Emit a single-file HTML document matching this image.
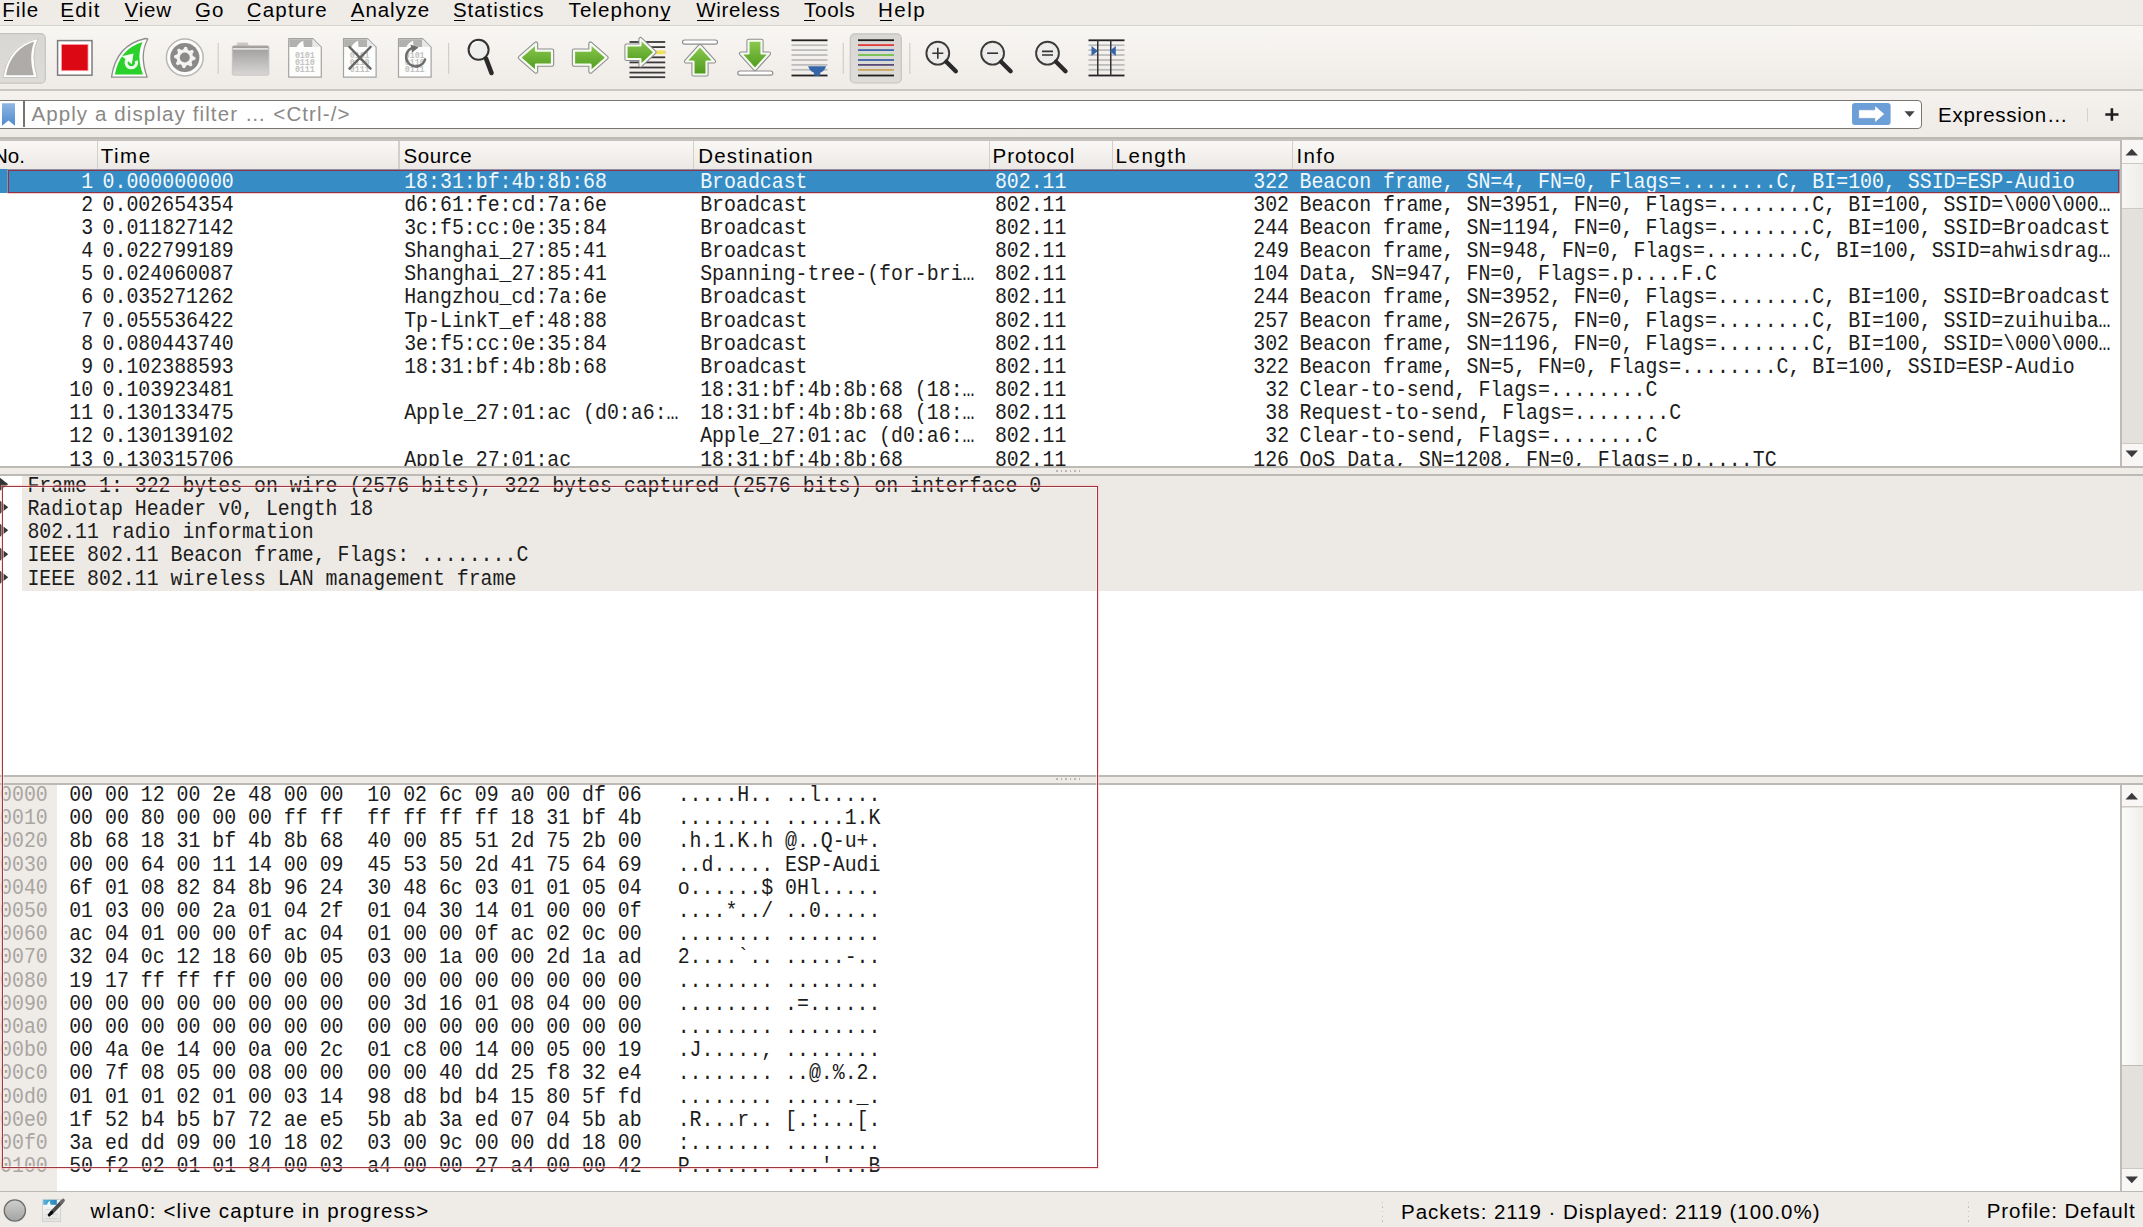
<!DOCTYPE html>
<html><head><meta charset="utf-8"><title>Wireshark</title>
<style>
html,body{margin:0;padding:0}
body{width:2143px;height:1227px;overflow:hidden;position:relative;background:#efebe7;font-family:"Liberation Sans", sans-serif}
div,svg{position:absolute}
.s{white-space:pre;line-height:normal;font-family:"Liberation Sans", sans-serif}
.m{white-space:pre;line-height:normal;font-family:"Liberation Mono", monospace;font-size:19.8970px;transform:scaleY(1.07);transform-origin:0 17px}
</style></head>
<body>
<div style="left:0px;top:0px;width:2143px;height:25px;background:#efebe7"></div>
<div style="left:0px;top:25px;width:2143px;height:1px;background:#d9d5d0"></div>
<div id="mFile" class="s" style="left:2.20px;top:-2.35px;font-size:20.5px;letter-spacing:1.000px;color:#000;">File</div>
<div id="mEdit" class="s" style="left:60.20px;top:-2.35px;font-size:20.5px;letter-spacing:1.333px;color:#000;">Edit</div>
<div id="mView" class="s" style="left:124.60px;top:-2.35px;font-size:20.5px;letter-spacing:0.833px;color:#000;">View</div>
<div id="mGo" class="s" style="left:195.00px;top:-2.35px;font-size:20.5px;letter-spacing:1.000px;color:#000;">Go</div>
<div id="mCapture" class="s" style="left:246.80px;top:-2.35px;font-size:20.5px;letter-spacing:1.167px;color:#000;">Capture</div>
<div id="mAnalyze" class="s" style="left:350.80px;top:-2.35px;font-size:20.5px;letter-spacing:0.917px;color:#000;">Analyze</div>
<div id="mStatistics" class="s" style="left:453.00px;top:-2.35px;font-size:20.5px;letter-spacing:0.944px;color:#000;">Statistics</div>
<div id="mTelephony" class="s" style="left:568.60px;top:-2.35px;font-size:20.5px;letter-spacing:1.062px;color:#000;">Telephony</div>
<div id="mWireless" class="s" style="left:696.20px;top:-2.35px;font-size:20.5px;letter-spacing:0.714px;color:#000;">Wireless</div>
<div id="mTools" class="s" style="left:804.00px;top:-2.35px;font-size:20.5px;letter-spacing:0.750px;color:#000;">Tools</div>
<div id="mHelp" class="s" style="left:878.00px;top:-2.35px;font-size:20.5px;letter-spacing:1.500px;color:#000;">Help</div>
<div style="left:4.2px;top:19.6px;width:9.3px;height:1.6px;background:#000"></div>
<div style="left:62.5px;top:19.6px;width:11.0px;height:1.6px;background:#000"></div>
<div style="left:124.5px;top:19.6px;width:13.0px;height:1.6px;background:#000"></div>
<div style="left:196px;top:19.6px;width:12px;height:1.6px;background:#000"></div>
<div style="left:248px;top:19.6px;width:12px;height:1.6px;background:#000"></div>
<div style="left:351px;top:19.6px;width:13px;height:1.6px;background:#000"></div>
<div style="left:454px;top:19.6px;width:11px;height:1.6px;background:#000"></div>
<div style="left:659px;top:19.6px;width:11.299999999999955px;height:1.6px;background:#000"></div>
<div style="left:696.5px;top:19.6px;width:17.5px;height:1.6px;background:#000"></div>
<div style="left:804px;top:19.6px;width:11px;height:1.6px;background:#000"></div>
<div style="left:880px;top:19.6px;width:12px;height:1.6px;background:#000"></div>
<div style="left:0px;top:26px;width:2143px;height:63.5px;background:linear-gradient(#f8f6f3,#efebe7)"></div>
<div style="left:0px;top:89px;width:2143px;height:1.5px;background:#c9c5c0"></div>
<svg style="left:0;top:0" width="1200" height="95" viewBox="0 0 1200 95"><defs>
<linearGradient id="gArrowH" x1="0" y1="0" x2="0" y2="1"><stop offset="0" stop-color="#8bc94f"/><stop offset="1" stop-color="#4e9a1c"/></linearGradient>
<linearGradient id="gFolder" x1="0" y1="0" x2="0" y2="1"><stop offset="0" stop-color="#9d9b99"/><stop offset="1" stop-color="#d9d7d5"/></linearGradient>
<linearGradient id="gBtn" x1="0" y1="0" x2="0" y2="1"><stop offset="0" stop-color="#d9d7d4"/><stop offset="1" stop-color="#dedcd9"/></linearGradient>
</defs><rect x="-4" y="33.6" width="49.3" height="49.6" rx="4.5" fill="url(#gBtn)" stroke="#c6c3bf" stroke-width="1.2"/><path d="M4.5 76.5 Q9 47 36.5 39.5 Q29 55 35.5 76.5 Z" fill="#aeaba8" stroke="#fff" stroke-width="2.6" stroke-linejoin="round"/><path d="M3 77.5 Q8 45.5 38 38.5 Q30.5 55 37.2 77.5 Z" fill="none" stroke="#c4c1bd" stroke-width="0.9" stroke-linejoin="round"/><rect x="57.6" y="40.6" width="34.4" height="34.6" fill="#fff" stroke="#7c7c7c" stroke-width="1.5"/><rect x="61.6" y="44.5" width="26.4" height="26.2" fill="#dc0914" stroke="#ff9aa0" stroke-width="0.8"/><path d="M111.5 77.2 Q116 45 145.5 38.5 L147.8 39 Q139 55 147.2 77.2 Z" fill="#fdfdfd" stroke="#8f8f8f" stroke-width="1.3" stroke-linejoin="round"/><path d="M114.8 74.6 Q119.5 49 142.6 42 Q136 56 143 74.6 Z" fill="#2bd12b"/><path d="M127.2 59.5 A5.2 5.2 0 1 0 136.2 60.8" fill="none" stroke="#eefcee" stroke-width="3"/><path d="M121.8 56.2 L133.5 53.6 L131.8 64.2 Z" fill="#f4fff4"/><circle cx="184.8" cy="57.5" r="18.4" fill="#fcfcfb" stroke="#b9b7b4" stroke-width="1.5"/><circle cx="184.8" cy="57.5" r="14.6" fill="#8b8a89"/><polygon points="184.80,46.70 186.91,46.91 187.94,49.92 189.36,50.68 192.44,49.86 193.78,51.50 192.38,54.36 192.84,55.90 195.60,57.50 195.39,59.61 192.38,60.64 191.62,62.06 192.44,65.14 190.80,66.48 187.94,65.08 186.40,65.54 184.80,68.30 182.69,68.09 181.66,65.08 180.24,64.32 177.16,65.14 175.82,63.50 177.22,60.64 176.76,59.10 174.00,57.50 174.21,55.39 177.22,54.36 177.98,52.94 177.16,49.86 178.80,48.52 181.66,49.92 183.20,49.46" fill="#f4f3f2"/><circle cx="184.8" cy="57.5" r="5" fill="#8b8a89"/><rect x="217.6" y="43" width="1.2" height="31" fill="#d2cec9"/><rect x="448.0" y="43" width="1.2" height="31" fill="#d2cec9"/><rect x="842.6999999999999" y="43" width="1.2" height="31" fill="#d2cec9"/><rect x="909.1999999999999" y="43" width="1.2" height="31" fill="#d2cec9"/><path d="M236 46 L237.5 42.5 L247.5 42.5 L249 46 Z" fill="#c9c7c5"/><rect x="232.3" y="45.8" width="36.6" height="29.4" rx="1.5" fill="url(#gFolder)" stroke="#c2c0be" stroke-width="0.8"/><rect x="233" y="48.2" width="35.2" height="1.4" fill="#f2f1f0"/><path d="M288.7 38.6 L312.8 38.6 L321.3 47.2 L321.3 77.2 L288.7 77.2 Z" fill="#fdfdfc" stroke="#a3a3a3" stroke-width="1.2" stroke-linejoin="round"/><path d="M289.3 39.2 L312.5 39.2 L312.5 47 L303.9 47 Q302.9 43 303.5 40.8 Q298.7 42.5 296.5 47 L289.3 47 Z" fill="#b1b1b0"/><path d="M312.8 39.2 L320.7 47 L312.8 47 Z" fill="#e9e9e9"/><text x="294.9" y="57.6" font-family="Liberation Mono" font-size="8.4" font-weight="bold" fill="#c2c2c2" letter-spacing="-0.05">0101</text><text x="294.9" y="65.0" font-family="Liberation Mono" font-size="8.4" font-weight="bold" fill="#c2c2c2" letter-spacing="-0.05">0110</text><text x="294.9" y="72.4" font-family="Liberation Mono" font-size="8.4" font-weight="bold" fill="#c2c2c2" letter-spacing="-0.05">0111</text><path d="M343.5 38.6 L367.6 38.6 L376.1 47.2 L376.1 77.2 L343.5 77.2 Z" fill="#fdfdfc" stroke="#a3a3a3" stroke-width="1.2" stroke-linejoin="round"/><path d="M344.1 39.2 L367.3 39.2 L367.3 47 L358.7 47 Q357.7 43 358.3 40.8 Q353.5 42.5 351.3 47 L344.1 47 Z" fill="#b1b1b0"/><path d="M367.6 39.2 L375.5 47 L367.6 47 Z" fill="#e9e9e9"/><text x="349.7" y="57.6" font-family="Liberation Mono" font-size="8.4" font-weight="bold" fill="#c2c2c2" letter-spacing="-0.05">0101</text><text x="349.7" y="65.0" font-family="Liberation Mono" font-size="8.4" font-weight="bold" fill="#c2c2c2" letter-spacing="-0.05">0110</text><text x="349.7" y="72.4" font-family="Liberation Mono" font-size="8.4" font-weight="bold" fill="#c2c2c2" letter-spacing="-0.05">0111</text><path d="M349.5 47 L370.5 68.6 M370.5 47 L349.5 68.6" stroke="#656565" stroke-width="2.5" stroke-linecap="round"/><path d="M398.5 38.6 L422.6 38.6 L431.1 47.2 L431.1 77.2 L398.5 77.2 Z" fill="#fdfdfc" stroke="#a3a3a3" stroke-width="1.2" stroke-linejoin="round"/><path d="M399.1 39.2 L422.3 39.2 L422.3 47 L413.7 47 Q412.7 43 413.3 40.8 Q408.5 42.5 406.3 47 L399.1 47 Z" fill="#b1b1b0"/><path d="M422.6 39.2 L430.5 47 L422.6 47 Z" fill="#e9e9e9"/><text x="404.7" y="57.6" font-family="Liberation Mono" font-size="8.4" font-weight="bold" fill="#c2c2c2" letter-spacing="-0.05">0101</text><text x="404.7" y="65.0" font-family="Liberation Mono" font-size="8.4" font-weight="bold" fill="#c2c2c2" letter-spacing="-0.05">0110</text><text x="404.7" y="72.4" font-family="Liberation Mono" font-size="8.4" font-weight="bold" fill="#c2c2c2" letter-spacing="-0.05">0111</text><path d="M411.0 48.5 A9.6 9.6 0 1 0 425.0 59.5" fill="none" stroke="#6c6c6c" stroke-width="2.5" stroke-linecap="round"/><path d="M410.5 44.5 L418.5 47.5 L412.0 52.5 Z" fill="#6c6c6c"/><circle cx="478.6" cy="49.8" r="10" fill="#eeeeec" stroke="#333" stroke-width="2"/><path d="M472 45 A7 7 0 0 1 478 42" fill="none" stroke="#fff" stroke-width="1.3"/><path d="M486 58.5 L491.5 73" stroke="#2a2a2a" stroke-width="4.6" stroke-linecap="round"/><polygon points="520,57.6 536,43.6 536,50.6 552,50.6 552,64.6 536,64.6 536,71.6" fill="url(#gArrowH)" stroke="#8e8e8e" stroke-width="4.4" stroke-linejoin="round"/><polygon points="520,57.6 536,43.6 536,50.6 552,50.6 552,64.6 536,64.6 536,71.6" fill="url(#gArrowH)" stroke="#f6fbf2" stroke-width="2.2" stroke-linejoin="round"/><polygon points="606.5,57.6 590.5,43.6 590.5,50.6 574,50.6 574,64.6 590.5,64.6 590.5,71.6" fill="url(#gArrowH)" stroke="#8e8e8e" stroke-width="4.4" stroke-linejoin="round"/><polygon points="606.5,57.6 590.5,43.6 590.5,50.6 574,50.6 574,64.6 590.5,64.6 590.5,71.6" fill="url(#gArrowH)" stroke="#f6fbf2" stroke-width="2.2" stroke-linejoin="round"/><rect x="629.5" y="41.1" width="35.7" height="1.8" fill="#3a3a3a"/><rect x="629.5" y="46.2" width="35.7" height="1.8" fill="#3a3a3a"/><rect x="629.5" y="51.300000000000004" width="35.7" height="1.8" fill="#3a3a3a"/><rect x="629.5" y="56.4" width="35.7" height="1.8" fill="#3a3a3a"/><rect x="629.5" y="61.5" width="35.7" height="1.8" fill="#3a3a3a"/><rect x="629.5" y="66.6" width="35.7" height="1.8" fill="#3a3a3a"/><rect x="629.5" y="71.69999999999999" width="35.7" height="1.8" fill="#3a3a3a"/><rect x="629.5" y="76.3" width="35.7" height="1.8" fill="#3a3a3a"/><rect x="655" y="50.5" width="10" height="3.6" fill="#f2e05a"/><polygon points="654.5,52.2 640.5,39 640.5,45.5 626.5,45.5 626.5,59 640.5,59 640.5,65.5" fill="url(#gArrowH)" stroke="#8e8e8e" stroke-width="4.2" stroke-linejoin="round"/><polygon points="654.5,52.2 640.5,39 640.5,45.5 626.5,45.5 626.5,59 640.5,59 640.5,65.5" fill="url(#gArrowH)" stroke="#f6fbf2" stroke-width="2.1" stroke-linejoin="round"/><rect x="682.5" y="40" width="35" height="4.2" rx="2.1" fill="#fff" stroke="#8e8e8e" stroke-width="1.2"/><polygon points="700,46 686,61.5 693.5,61.5 693.5,74.5 706.5,74.5 706.5,61.5 714,61.5" fill="url(#gArrowH)" stroke="#8e8e8e" stroke-width="4.2" stroke-linejoin="round"/><polygon points="700,46 686,61.5 693.5,61.5 693.5,74.5 706.5,74.5 706.5,61.5 714,61.5" fill="url(#gArrowH)" stroke="#f6fbf2" stroke-width="2.1" stroke-linejoin="round"/><rect x="737.8" y="71" width="35" height="4.2" rx="2.1" fill="#fff" stroke="#8e8e8e" stroke-width="1.2"/><polygon points="755,69 741,53.5 748.5,53.5 748.5,40.8 761.5,40.8 761.5,53.5 769,53.5" fill="url(#gArrowH)" stroke="#8e8e8e" stroke-width="4.2" stroke-linejoin="round"/><polygon points="755,69 741,53.5 748.5,53.5 748.5,40.8 761.5,40.8 761.5,53.5 769,53.5" fill="url(#gArrowH)" stroke="#f6fbf2" stroke-width="2.1" stroke-linejoin="round"/><rect x="791.5" y="39.4" width="36" height="1.8" fill="#222"/><rect x="791.5" y="44.300000000000004" width="36" height="1.8" fill="#bdbdbd"/><rect x="791.5" y="49.2" width="36" height="1.8" fill="#bdbdbd"/><rect x="791.5" y="54.1" width="36" height="1.8" fill="#bdbdbd"/><rect x="791.5" y="59.1" width="36" height="1.8" fill="#bdbdbd"/><rect x="791.5" y="64.0" width="36" height="1.8" fill="#bdbdbd"/><rect x="791.5" y="68.89999999999999" width="36" height="1.8" fill="#bdbdbd"/><rect x="791.5" y="74.6" width="36" height="1.8" fill="#222"/><path d="M808.2 66.2 L826 66.2 Q825 70.5 820.5 72.5 L819.8 75.8 L814.4 75.8 L813.7 72.5 Q809.2 70.5 808.2 66.2 Z" fill="#3566a8"/><rect x="850.3" y="33.8" width="51" height="49.2" rx="4.5" fill="url(#gBtn)" stroke="#c6c3bf" stroke-width="1.2"/><rect x="858" y="39.300000000000004" width="36" height="1.8" fill="#1e1e1e"/><rect x="858" y="44.2" width="36" height="1.8" fill="#e03a3a"/><rect x="858" y="49.2" width="36" height="1.8" fill="#3c64a8"/><rect x="858" y="54.1" width="36" height="1.8" fill="#72c04c"/><rect x="858" y="59.1" width="36" height="1.8" fill="#3c64a8"/><rect x="858" y="64.0" width="36" height="1.8" fill="#5a4c78"/><rect x="858" y="69.0" width="36" height="1.8" fill="#c9a55a"/><rect x="858" y="74.6" width="36" height="1.8" fill="#1e1e1e"/><circle cx="937.8" cy="53.2" r="11.4" fill="#edeceb" stroke="#3a3a3a" stroke-width="1.9"/><path d="M946.3 61.7 L955.8 71.2" stroke="#2a2a2a" stroke-width="4.4" stroke-linecap="round"/><path d="M932.3 53.2 L943.3 53.2 M937.8 47.7 L937.8 58.7" stroke="#333" stroke-width="1.6"/><circle cx="992.6" cy="53.2" r="11.4" fill="#edeceb" stroke="#3a3a3a" stroke-width="1.9"/><path d="M1001.1 61.7 L1010.6 71.2" stroke="#2a2a2a" stroke-width="4.4" stroke-linecap="round"/><path d="M987.1 53.2 L998.1 53.2" stroke="#333" stroke-width="1.6"/><circle cx="1047.5" cy="53.2" r="11.4" fill="#edeceb" stroke="#3a3a3a" stroke-width="1.9"/><path d="M1056.0 61.7 L1065.5 71.2" stroke="#2a2a2a" stroke-width="4.4" stroke-linecap="round"/><path d="M1042.0 51.400000000000006 L1053.0 51.400000000000006 M1042.0 55.0 L1053.0 55.0" stroke="#333" stroke-width="1.6"/><rect x="1088.5" y="39.4" width="36" height="1.8" fill="#222"/><rect x="1088.5" y="44.300000000000004" width="36" height="1.8" fill="#bdbdbd"/><rect x="1088.5" y="49.2" width="36" height="1.8" fill="#bdbdbd"/><rect x="1088.5" y="54.1" width="36" height="1.8" fill="#bdbdbd"/><rect x="1088.5" y="59.1" width="36" height="1.8" fill="#bdbdbd"/><rect x="1088.5" y="64.0" width="36" height="1.8" fill="#bdbdbd"/><rect x="1088.5" y="68.89999999999999" width="36" height="1.8" fill="#bdbdbd"/><rect x="1088.5" y="74.6" width="36" height="1.8" fill="#222"/><rect x="1097" y="40" width="1.5" height="36" fill="#333"/><rect x="1110" y="40" width="1.5" height="36" fill="#333"/><path d="M1091.5 46 L1098 51 L1091.5 56 Z" fill="#3566a8"/><path d="M1115.8 46 L1109.5 51 L1115.8 56 Z" fill="#3566a8"/></svg>
<div style="left:0px;top:90.5px;width:2143px;height:47.5px;background:linear-gradient(#f4f1ee,#eeebe7)"></div>
<div style="left:0px;top:137.3px;width:2143px;height:1.7px;background:#bdb9b4"></div>
<div style="left:-6px;top:99.6px;width:1928.3px;height:29px;background:#fff;border:1.5px solid #7a7672;border-radius:4px;box-sizing:border-box"></div>
<div style="left:23.3px;top:101px;width:1.4px;height:26px;background:#77736f"></div>
<div id="fPlace" class="s" style="left:31.40px;top:101.65px;font-size:20.5px;letter-spacing:1.109px;color:#8a8886;">Apply a display filter … &lt;Ctrl-/&gt;</div>
<div id="fExpr" class="s" style="left:1938.00px;top:103.25px;font-size:20.5px;letter-spacing:0.750px;color:#000;">Expression…</div>
<div style="left:2087.3px;top:108px;width:1.2px;height:14px;background:#d5d1cc"></div>
<svg style="left:0;top:90px" width="2143" height="48" viewBox="0 90 2143 48"><defs><linearGradient id="gBm" x1="0" y1="0" x2="0" y2="1"><stop offset="0" stop-color="#8fb6e2"/><stop offset="1" stop-color="#4f8bcf"/></linearGradient></defs><path d="M2 103.3 L15 103.3 L15 125.7 L8.5 120.5 L2 125.7 Z" fill="url(#gBm)"/><rect x="1852" y="103.1" width="38.6" height="22" rx="3" fill="#6c9fd8"/><path d="M1858.6 109.8 L1874.8 109.8 L1874.8 105.4 L1884.6 114.1 L1874.8 122.8 L1874.8 118.4 L1858.6 118.4 Z" fill="#fff" stroke="#5a8cc8" stroke-width="0.6" stroke-linejoin="round"/><path d="M1904.5 111.2 L1914.7 111.2 L1909.6 117 Z" fill="#444"/><path d="M2105.3 114.5 L2118.5 114.5 M2111.9 108.2 L2111.9 120.8" stroke="#1e1e1e" stroke-width="2.6"/></svg>
<div style="left:0px;top:139px;width:2143px;height:1.5px;background:#c6c2bd"></div>
<div style="left:0px;top:140.5px;width:2121px;height:29px;background:linear-gradient(#faf8f6,#ebe8e4)"></div>
<div style="left:96.5px;top:141px;width:1.2px;height:28.5px;background:#d3cfca"></div>
<div style="left:398.4px;top:141px;width:1.2px;height:28.5px;background:#d3cfca"></div>
<div style="left:692.6999999999999px;top:141px;width:1.2px;height:28.5px;background:#d3cfca"></div>
<div style="left:988.6999999999999px;top:141px;width:1.2px;height:28.5px;background:#d3cfca"></div>
<div style="left:1111.5px;top:141px;width:1.2px;height:28.5px;background:#d3cfca"></div>
<div style="left:1292.3000000000002px;top:141px;width:1.2px;height:28.5px;background:#d3cfca"></div>
<div style="left:0px;top:169.4px;width:2121px;height:297px;background:#fff"></div>
<div id="hNo" class="s" style="left:-7.00px;top:143.85px;font-size:20.5px;letter-spacing:0.000px;color:#000;">No.</div>
<div id="hTime" class="s" style="left:100.80px;top:143.85px;font-size:20.5px;letter-spacing:1.500px;color:#000;">Time</div>
<div id="hSource" class="s" style="left:403.60px;top:143.85px;font-size:20.5px;letter-spacing:0.600px;color:#000;">Source</div>
<div id="hDest" class="s" style="left:698.20px;top:143.85px;font-size:20.5px;letter-spacing:1.200px;color:#000;">Destination</div>
<div id="hProto" class="s" style="left:992.60px;top:143.85px;font-size:20.5px;letter-spacing:0.929px;color:#000;">Protocol</div>
<div id="hLength" class="s" style="left:1115.60px;top:143.85px;font-size:20.5px;letter-spacing:1.500px;color:#000;">Length</div>
<div id="hInfo" class="s" style="left:1296.40px;top:143.85px;font-size:20.5px;letter-spacing:1.333px;color:#000;">Info</div>
<div style="left:0px;top:169.4px;width:2120px;height:23.7px;background:#368dc6"></div>
<div style="left:0;top:169px;width:2120px;height:297.5px;overflow:hidden">
<div class="m" style="left:81.26px;top:1.62px;color:#f2f8fd;">1</div>
<div class="m" style="left:102.60px;top:1.62px;color:#f2f8fd;">0.000000000</div>
<div class="m" style="left:404.20px;top:1.62px;color:#f2f8fd;">18:31:bf:4b:8b:68</div>
<div class="m" style="left:700.20px;top:1.62px;color:#f2f8fd;">Broadcast</div>
<div class="m" style="left:994.90px;top:1.62px;color:#f2f8fd;">802.11</div>
<div class="m" style="left:1253.28px;top:1.62px;color:#f2f8fd;">322</div>
<div class="m" style="left:1299.50px;top:1.62px;color:#f2f8fd;">Beacon frame, SN=4, FN=0, Flags=........C, BI=100, SSID=ESP-Audio</div>
<div class="m" style="left:81.26px;top:24.79px;color:#1c1c1c;">2</div>
<div class="m" style="left:102.60px;top:24.79px;color:#1c1c1c;">0.002654354</div>
<div class="m" style="left:404.20px;top:24.79px;color:#1c1c1c;">d6:61:fe:cd:7a:6e</div>
<div class="m" style="left:700.20px;top:24.79px;color:#1c1c1c;">Broadcast</div>
<div class="m" style="left:994.90px;top:24.79px;color:#1c1c1c;">802.11</div>
<div class="m" style="left:1253.28px;top:24.79px;color:#1c1c1c;">302</div>
<div class="m" style="left:1299.50px;top:24.79px;color:#1c1c1c;">Beacon frame, SN=3951, FN=0, Flags=........C, BI=100, SSID=\000\000…</div>
<div class="m" style="left:81.26px;top:47.96px;color:#1c1c1c;">3</div>
<div class="m" style="left:102.60px;top:47.96px;color:#1c1c1c;">0.011827142</div>
<div class="m" style="left:404.20px;top:47.96px;color:#1c1c1c;">3c:f5:cc:0e:35:84</div>
<div class="m" style="left:700.20px;top:47.96px;color:#1c1c1c;">Broadcast</div>
<div class="m" style="left:994.90px;top:47.96px;color:#1c1c1c;">802.11</div>
<div class="m" style="left:1253.28px;top:47.96px;color:#1c1c1c;">244</div>
<div class="m" style="left:1299.50px;top:47.96px;color:#1c1c1c;">Beacon frame, SN=1194, FN=0, Flags=........C, BI=100, SSID=Broadcast</div>
<div class="m" style="left:81.26px;top:71.13px;color:#1c1c1c;">4</div>
<div class="m" style="left:102.60px;top:71.13px;color:#1c1c1c;">0.022799189</div>
<div class="m" style="left:404.20px;top:71.13px;color:#1c1c1c;">Shanghai_27:85:41</div>
<div class="m" style="left:700.20px;top:71.13px;color:#1c1c1c;">Broadcast</div>
<div class="m" style="left:994.90px;top:71.13px;color:#1c1c1c;">802.11</div>
<div class="m" style="left:1253.28px;top:71.13px;color:#1c1c1c;">249</div>
<div class="m" style="left:1299.50px;top:71.13px;color:#1c1c1c;">Beacon frame, SN=948, FN=0, Flags=........C, BI=100, SSID=ahwisdrag…</div>
<div class="m" style="left:81.26px;top:94.30px;color:#1c1c1c;">5</div>
<div class="m" style="left:102.60px;top:94.30px;color:#1c1c1c;">0.024060087</div>
<div class="m" style="left:404.20px;top:94.30px;color:#1c1c1c;">Shanghai_27:85:41</div>
<div class="m" style="left:700.20px;top:94.30px;color:#1c1c1c;">Spanning-tree-(for-bri…</div>
<div class="m" style="left:994.90px;top:94.30px;color:#1c1c1c;">802.11</div>
<div class="m" style="left:1253.28px;top:94.30px;color:#1c1c1c;">104</div>
<div class="m" style="left:1299.50px;top:94.30px;color:#1c1c1c;">Data, SN=947, FN=0, Flags=.p....F.C</div>
<div class="m" style="left:81.26px;top:117.47px;color:#1c1c1c;">6</div>
<div class="m" style="left:102.60px;top:117.47px;color:#1c1c1c;">0.035271262</div>
<div class="m" style="left:404.20px;top:117.47px;color:#1c1c1c;">Hangzhou_cd:7a:6e</div>
<div class="m" style="left:700.20px;top:117.47px;color:#1c1c1c;">Broadcast</div>
<div class="m" style="left:994.90px;top:117.47px;color:#1c1c1c;">802.11</div>
<div class="m" style="left:1253.28px;top:117.47px;color:#1c1c1c;">244</div>
<div class="m" style="left:1299.50px;top:117.47px;color:#1c1c1c;">Beacon frame, SN=3952, FN=0, Flags=........C, BI=100, SSID=Broadcast</div>
<div class="m" style="left:81.26px;top:140.64px;color:#1c1c1c;">7</div>
<div class="m" style="left:102.60px;top:140.64px;color:#1c1c1c;">0.055536422</div>
<div class="m" style="left:404.20px;top:140.64px;color:#1c1c1c;">Tp-LinkT_ef:48:88</div>
<div class="m" style="left:700.20px;top:140.64px;color:#1c1c1c;">Broadcast</div>
<div class="m" style="left:994.90px;top:140.64px;color:#1c1c1c;">802.11</div>
<div class="m" style="left:1253.28px;top:140.64px;color:#1c1c1c;">257</div>
<div class="m" style="left:1299.50px;top:140.64px;color:#1c1c1c;">Beacon frame, SN=2675, FN=0, Flags=........C, BI=100, SSID=zuihuiba…</div>
<div class="m" style="left:81.26px;top:163.81px;color:#1c1c1c;">8</div>
<div class="m" style="left:102.60px;top:163.81px;color:#1c1c1c;">0.080443740</div>
<div class="m" style="left:404.20px;top:163.81px;color:#1c1c1c;">3e:f5:cc:0e:35:84</div>
<div class="m" style="left:700.20px;top:163.81px;color:#1c1c1c;">Broadcast</div>
<div class="m" style="left:994.90px;top:163.81px;color:#1c1c1c;">802.11</div>
<div class="m" style="left:1253.28px;top:163.81px;color:#1c1c1c;">302</div>
<div class="m" style="left:1299.50px;top:163.81px;color:#1c1c1c;">Beacon frame, SN=1196, FN=0, Flags=........C, BI=100, SSID=\000\000…</div>
<div class="m" style="left:81.26px;top:186.98px;color:#1c1c1c;">9</div>
<div class="m" style="left:102.60px;top:186.98px;color:#1c1c1c;">0.102388593</div>
<div class="m" style="left:404.20px;top:186.98px;color:#1c1c1c;">18:31:bf:4b:8b:68</div>
<div class="m" style="left:700.20px;top:186.98px;color:#1c1c1c;">Broadcast</div>
<div class="m" style="left:994.90px;top:186.98px;color:#1c1c1c;">802.11</div>
<div class="m" style="left:1253.28px;top:186.98px;color:#1c1c1c;">322</div>
<div class="m" style="left:1299.50px;top:186.98px;color:#1c1c1c;">Beacon frame, SN=5, FN=0, Flags=........C, BI=100, SSID=ESP-Audio</div>
<div class="m" style="left:69.32px;top:210.15px;color:#1c1c1c;">10</div>
<div class="m" style="left:102.60px;top:210.15px;color:#1c1c1c;">0.103923481</div>
<div class="m" style="left:404.20px;top:210.15px;color:#1c1c1c;"></div>
<div class="m" style="left:700.20px;top:210.15px;color:#1c1c1c;">18:31:bf:4b:8b:68 (18:…</div>
<div class="m" style="left:994.90px;top:210.15px;color:#1c1c1c;">802.11</div>
<div class="m" style="left:1265.22px;top:210.15px;color:#1c1c1c;">32</div>
<div class="m" style="left:1299.50px;top:210.15px;color:#1c1c1c;">Clear-to-send, Flags=........C</div>
<div class="m" style="left:69.32px;top:233.32px;color:#1c1c1c;">11</div>
<div class="m" style="left:102.60px;top:233.32px;color:#1c1c1c;">0.130133475</div>
<div class="m" style="left:404.20px;top:233.32px;color:#1c1c1c;">Apple_27:01:ac (d0:a6:…</div>
<div class="m" style="left:700.20px;top:233.32px;color:#1c1c1c;">18:31:bf:4b:8b:68 (18:…</div>
<div class="m" style="left:994.90px;top:233.32px;color:#1c1c1c;">802.11</div>
<div class="m" style="left:1265.22px;top:233.32px;color:#1c1c1c;">38</div>
<div class="m" style="left:1299.50px;top:233.32px;color:#1c1c1c;">Request-to-send, Flags=........C</div>
<div class="m" style="left:69.32px;top:256.49px;color:#1c1c1c;">12</div>
<div class="m" style="left:102.60px;top:256.49px;color:#1c1c1c;">0.130139102</div>
<div class="m" style="left:404.20px;top:256.49px;color:#1c1c1c;"></div>
<div class="m" style="left:700.20px;top:256.49px;color:#1c1c1c;">Apple_27:01:ac (d0:a6:…</div>
<div class="m" style="left:994.90px;top:256.49px;color:#1c1c1c;">802.11</div>
<div class="m" style="left:1265.22px;top:256.49px;color:#1c1c1c;">32</div>
<div class="m" style="left:1299.50px;top:256.49px;color:#1c1c1c;">Clear-to-send, Flags=........C</div>
<div class="m" style="left:69.32px;top:279.66px;color:#1c1c1c;">13</div>
<div class="m" style="left:102.60px;top:279.66px;color:#1c1c1c;">0.130315706</div>
<div class="m" style="left:404.20px;top:279.66px;color:#1c1c1c;">Apple_27:01:ac</div>
<div class="m" style="left:700.20px;top:279.66px;color:#1c1c1c;">18:31:bf:4b:8b:68</div>
<div class="m" style="left:994.90px;top:279.66px;color:#1c1c1c;">802.11</div>
<div class="m" style="left:1253.28px;top:279.66px;color:#1c1c1c;">126</div>
<div class="m" style="left:1299.50px;top:279.66px;color:#1c1c1c;">QoS Data, SN=1208, FN=0, Flags=.p.....TC</div>
</div>
<div style="left:2120.3px;top:140px;width:1.4px;height:327px;background:#bfbbb6"></div>
<div style="left:2121.7px;top:140px;width:21.3px;height:327px;background:#e4e1dd"></div>
<div style="left:2121.7px;top:140px;width:21.3px;height:23px;background:#f8f7f6"></div>
<div style="left:2121.7px;top:162.6px;width:21.3px;height:1.2px;background:#cdc9c4"></div>
<div style="left:2121.7px;top:163.8px;width:21.3px;height:44px;background:linear-gradient(90deg,#f7f6f4,#efedea)"></div>
<div style="left:2121.7px;top:207.6px;width:21.3px;height:1.2px;background:#cdc9c4"></div>
<div style="left:2121.7px;top:443px;width:21.3px;height:1.2px;background:#cdc9c4"></div>
<div style="left:2121.7px;top:444.2px;width:21.3px;height:22.3px;background:#f8f7f6"></div>
<div style="left:0px;top:466px;width:2143px;height:1.8px;background:#bdb9b4"></div>
<svg style="left:2125px;top:148px" width="14" height="8"><path d="M0.5 7.5 L6.8 0.8 L13 7.5Z" fill="#3c3c3c"/></svg>
<svg style="left:2125px;top:450px" width="14" height="8"><path d="M0.5 0.5 L6.8 7.2 L13 0.5Z" fill="#3c3c3c"/></svg>
<div style="left:0px;top:467.8px;width:2143px;height:6.2px;background:#efebe7"></div>
<div style="left:0px;top:474px;width:2143px;height:1.8px;background:#bdb9b4"></div>
<div style="left:1056.0px;top:470px;width:1.5px;height:1.5px;background:#a8a4a0;border-radius:1px"></div>
<div style="left:1060.5px;top:470px;width:1.5px;height:1.5px;background:#a8a4a0;border-radius:1px"></div>
<div style="left:1065.0px;top:470px;width:1.5px;height:1.5px;background:#a8a4a0;border-radius:1px"></div>
<div style="left:1069.5px;top:470px;width:1.5px;height:1.5px;background:#a8a4a0;border-radius:1px"></div>
<div style="left:1074.0px;top:470px;width:1.5px;height:1.5px;background:#a8a4a0;border-radius:1px"></div>
<div style="left:1078.5px;top:470px;width:1.5px;height:1.5px;background:#a8a4a0;border-radius:1px"></div>
<div style="left:0px;top:475.8px;width:2143px;height:299.7px;background:#fff"></div>
<div style="left:22px;top:476px;width:2121px;height:114.8px;background:#edeae6"></div>
<div class="m" style="left:27.40px;top:474.82px;color:#1c1c1c;">Frame 1: 322 bytes on wire (2576 bits), 322 bytes captured (2576 bits) on interface 0</div>
<svg style="left:0px;top:477.10px" width="10" height="15"><path d="M0 0.8 L8.2 7.3 L0 13.8Z" fill="#333"/></svg>
<div class="m" style="left:27.40px;top:497.99px;color:#1c1c1c;">Radiotap Header v0, Length 18</div>
<svg style="left:0px;top:500.27px" width="10" height="15"><path d="M0 0.8 L8.2 7.3 L0 13.8Z" fill="#333"/></svg>
<div class="m" style="left:27.40px;top:521.16px;color:#1c1c1c;">802.11 radio information</div>
<svg style="left:0px;top:523.44px" width="10" height="15"><path d="M0 0.8 L8.2 7.3 L0 13.8Z" fill="#333"/></svg>
<div class="m" style="left:27.40px;top:544.33px;color:#1c1c1c;">IEEE 802.11 Beacon frame, Flags: ........C</div>
<svg style="left:0px;top:546.61px" width="10" height="15"><path d="M0 0.8 L8.2 7.3 L0 13.8Z" fill="#333"/></svg>
<div class="m" style="left:27.40px;top:567.50px;color:#1c1c1c;">IEEE 802.11 wireless LAN management frame</div>
<svg style="left:0px;top:569.78px" width="10" height="15"><path d="M0 0.8 L8.2 7.3 L0 13.8Z" fill="#333"/></svg>
<div style="left:0px;top:775px;width:2143px;height:1.8px;background:#bdb9b4"></div>
<div style="left:0px;top:776.8px;width:2143px;height:6.4px;background:#efebe7"></div>
<div style="left:0px;top:783.2px;width:2143px;height:1.8px;background:#bdb9b4"></div>
<div style="left:1056.0px;top:778px;width:1.5px;height:1.5px;background:#a8a4a0;border-radius:1px"></div>
<div style="left:1060.5px;top:778px;width:1.5px;height:1.5px;background:#a8a4a0;border-radius:1px"></div>
<div style="left:1065.0px;top:778px;width:1.5px;height:1.5px;background:#a8a4a0;border-radius:1px"></div>
<div style="left:1069.5px;top:778px;width:1.5px;height:1.5px;background:#a8a4a0;border-radius:1px"></div>
<div style="left:1074.0px;top:778px;width:1.5px;height:1.5px;background:#a8a4a0;border-radius:1px"></div>
<div style="left:1078.5px;top:778px;width:1.5px;height:1.5px;background:#a8a4a0;border-radius:1px"></div>
<div style="left:0px;top:785px;width:2120.5px;height:406px;background:#fff"></div>
<div style="left:0px;top:785px;width:57.4px;height:406px;background:#efebe7"></div>
<div style="left:0;top:785px;width:2120px;height:406px;overflow:hidden">
<div class="m" style="left:0.10px;top:-0.98px;color:#a9a5a1;">0000</div>
<div class="m" style="left:69.20px;top:-0.98px;color:#1c1c1c;">00 00 12 00 2e 48 00 00  10 02 6c 09 a0 00 df 06</div>
<div class="m" style="left:677.70px;top:-0.98px;color:#1c1c1c;">.....H.. ..l.....</div>
<div class="m" style="left:0.10px;top:22.22px;color:#a9a5a1;">0010</div>
<div class="m" style="left:69.20px;top:22.22px;color:#1c1c1c;">00 00 80 00 00 00 ff ff  ff ff ff ff 18 31 bf 4b</div>
<div class="m" style="left:677.70px;top:22.22px;color:#1c1c1c;">........ .....1.K</div>
<div class="m" style="left:0.10px;top:45.42px;color:#a9a5a1;">0020</div>
<div class="m" style="left:69.20px;top:45.42px;color:#1c1c1c;">8b 68 18 31 bf 4b 8b 68  40 00 85 51 2d 75 2b 00</div>
<div class="m" style="left:677.70px;top:45.42px;color:#1c1c1c;">.h.1.K.h @..Q-u+.</div>
<div class="m" style="left:0.10px;top:68.62px;color:#a9a5a1;">0030</div>
<div class="m" style="left:69.20px;top:68.62px;color:#1c1c1c;">00 00 64 00 11 14 00 09  45 53 50 2d 41 75 64 69</div>
<div class="m" style="left:677.70px;top:68.62px;color:#1c1c1c;">..d..... ESP-Audi</div>
<div class="m" style="left:0.10px;top:91.82px;color:#a9a5a1;">0040</div>
<div class="m" style="left:69.20px;top:91.82px;color:#1c1c1c;">6f 01 08 82 84 8b 96 24  30 48 6c 03 01 01 05 04</div>
<div class="m" style="left:677.70px;top:91.82px;color:#1c1c1c;">o......$ 0Hl.....</div>
<div class="m" style="left:0.10px;top:115.02px;color:#a9a5a1;">0050</div>
<div class="m" style="left:69.20px;top:115.02px;color:#1c1c1c;">01 03 00 00 2a 01 04 2f  01 04 30 14 01 00 00 0f</div>
<div class="m" style="left:677.70px;top:115.02px;color:#1c1c1c;">....*../ ..0.....</div>
<div class="m" style="left:0.10px;top:138.22px;color:#a9a5a1;">0060</div>
<div class="m" style="left:69.20px;top:138.22px;color:#1c1c1c;">ac 04 01 00 00 0f ac 04  01 00 00 0f ac 02 0c 00</div>
<div class="m" style="left:677.70px;top:138.22px;color:#1c1c1c;">........ ........</div>
<div class="m" style="left:0.10px;top:161.42px;color:#a9a5a1;">0070</div>
<div class="m" style="left:69.20px;top:161.42px;color:#1c1c1c;">32 04 0c 12 18 60 0b 05  03 00 1a 00 00 2d 1a ad</div>
<div class="m" style="left:677.70px;top:161.42px;color:#1c1c1c;">2....`.. .....-..</div>
<div class="m" style="left:0.10px;top:184.62px;color:#a9a5a1;">0080</div>
<div class="m" style="left:69.20px;top:184.62px;color:#1c1c1c;">19 17 ff ff ff 00 00 00  00 00 00 00 00 00 00 00</div>
<div class="m" style="left:677.70px;top:184.62px;color:#1c1c1c;">........ ........</div>
<div class="m" style="left:0.10px;top:207.82px;color:#a9a5a1;">0090</div>
<div class="m" style="left:69.20px;top:207.82px;color:#1c1c1c;">00 00 00 00 00 00 00 00  00 3d 16 01 08 04 00 00</div>
<div class="m" style="left:677.70px;top:207.82px;color:#1c1c1c;">........ .=......</div>
<div class="m" style="left:0.10px;top:231.02px;color:#a9a5a1;">00a0</div>
<div class="m" style="left:69.20px;top:231.02px;color:#1c1c1c;">00 00 00 00 00 00 00 00  00 00 00 00 00 00 00 00</div>
<div class="m" style="left:677.70px;top:231.02px;color:#1c1c1c;">........ ........</div>
<div class="m" style="left:0.10px;top:254.22px;color:#a9a5a1;">00b0</div>
<div class="m" style="left:69.20px;top:254.22px;color:#1c1c1c;">00 4a 0e 14 00 0a 00 2c  01 c8 00 14 00 05 00 19</div>
<div class="m" style="left:677.70px;top:254.22px;color:#1c1c1c;">.J....., ........</div>
<div class="m" style="left:0.10px;top:277.42px;color:#a9a5a1;">00c0</div>
<div class="m" style="left:69.20px;top:277.42px;color:#1c1c1c;">00 7f 08 05 00 08 00 00  00 00 40 dd 25 f8 32 e4</div>
<div class="m" style="left:677.70px;top:277.42px;color:#1c1c1c;">........ ..@.%.2.</div>
<div class="m" style="left:0.10px;top:300.62px;color:#a9a5a1;">00d0</div>
<div class="m" style="left:69.20px;top:300.62px;color:#1c1c1c;">01 01 01 02 01 00 03 14  98 d8 bd b4 15 80 5f fd</div>
<div class="m" style="left:677.70px;top:300.62px;color:#1c1c1c;">........ ......_.</div>
<div class="m" style="left:0.10px;top:323.82px;color:#a9a5a1;">00e0</div>
<div class="m" style="left:69.20px;top:323.82px;color:#1c1c1c;">1f 52 b4 b5 b7 72 ae e5  5b ab 3a ed 07 04 5b ab</div>
<div class="m" style="left:677.70px;top:323.82px;color:#1c1c1c;">.R...r.. [.:...[.</div>
<div class="m" style="left:0.10px;top:347.02px;color:#a9a5a1;">00f0</div>
<div class="m" style="left:69.20px;top:347.02px;color:#1c1c1c;">3a ed dd 09 00 10 18 02  03 00 9c 00 00 dd 18 00</div>
<div class="m" style="left:677.70px;top:347.02px;color:#1c1c1c;">:....... ........</div>
<div class="m" style="left:0.10px;top:370.22px;color:#a9a5a1;">0100</div>
<div class="m" style="left:69.20px;top:370.22px;color:#1c1c1c;">50 f2 02 01 01 84 00 03  a4 00 00 27 a4 00 00 42</div>
<div class="m" style="left:677.70px;top:370.22px;color:#1c1c1c;">P....... ...'...B</div>
</div>
<div style="left:2120.3px;top:785px;width:1.4px;height:406px;background:#bfbbb6"></div>
<div style="left:2121.7px;top:785px;width:21.3px;height:406px;background:#e4e1dd"></div>
<div style="left:2121.7px;top:785px;width:21.3px;height:21.5px;background:#f8f7f6"></div>
<div style="left:2121.7px;top:806.3px;width:21.3px;height:1.2px;background:#cdc9c4"></div>
<div style="left:2121.7px;top:807.5px;width:21.3px;height:257.5px;background:linear-gradient(90deg,#fbfbfa,#f0eeeb)"></div>
<div style="left:2121.7px;top:1064.8px;width:21.3px;height:1.3px;background:#bebab5"></div>
<div style="left:2121.7px;top:1168px;width:21.3px;height:1.2px;background:#cdc9c4"></div>
<div style="left:2121.7px;top:1169.2px;width:21.3px;height:22px;background:#f8f7f6"></div>
<svg style="left:2125px;top:792px" width="14" height="8"><path d="M0.5 7.5 L6.8 0.8 L13 7.5Z" fill="#3c3c3c"/></svg>
<svg style="left:2125px;top:1175.5px" width="14" height="8"><path d="M0.5 0.5 L6.8 7.2 L13 0.5Z" fill="#3c3c3c"/></svg>
<div style="left:0px;top:1190.5px;width:2143px;height:1.8px;background:#bdb9b4"></div>
<div style="left:0px;top:1192.3px;width:2143px;height:34.7px;background:#efebe7"></div>
<div id="sWlan" class="s" style="left:90.40px;top:1199.45px;font-size:20.5px;letter-spacing:1.156px;color:#000;">wlan0: &lt;live capture in progress&gt;</div>
<div id="sPackets" class="s" style="left:1401.00px;top:1200.25px;font-size:20.5px;letter-spacing:0.962px;color:#000;">Packets: 2119 · Displayed: 2119 (100.0%)</div>
<div id="sProfile" class="s" style="left:1986.80px;top:1199.45px;font-size:20.5px;letter-spacing:0.900px;color:#000;">Profile: Default</div>
<div style="left:1381.8999999999999px;top:1201.5px;width:1.4px;height:1.4px;background:#bdb9b4;border-radius:1px"></div>
<div style="left:1381.8999999999999px;top:1206.2px;width:1.4px;height:1.4px;background:#bdb9b4;border-radius:1px"></div>
<div style="left:1381.8999999999999px;top:1210.9px;width:1.4px;height:1.4px;background:#bdb9b4;border-radius:1px"></div>
<div style="left:1381.8999999999999px;top:1215.6px;width:1.4px;height:1.4px;background:#bdb9b4;border-radius:1px"></div>
<div style="left:1381.8999999999999px;top:1220.3px;width:1.4px;height:1.4px;background:#bdb9b4;border-radius:1px"></div>
<div style="left:1967.5px;top:1201.5px;width:1.4px;height:1.4px;background:#bdb9b4;border-radius:1px"></div>
<div style="left:1967.5px;top:1206.2px;width:1.4px;height:1.4px;background:#bdb9b4;border-radius:1px"></div>
<div style="left:1967.5px;top:1210.9px;width:1.4px;height:1.4px;background:#bdb9b4;border-radius:1px"></div>
<div style="left:1967.5px;top:1215.6px;width:1.4px;height:1.4px;background:#bdb9b4;border-radius:1px"></div>
<div style="left:1967.5px;top:1220.3px;width:1.4px;height:1.4px;background:#bdb9b4;border-radius:1px"></div>
<svg style="left:0;top:1192px" width="80" height="35" viewBox="0 1192 80 35"><defs><linearGradient id="gSt" x1="0" y1="0" x2="0" y2="1"><stop offset="0" stop-color="#cfcfcd"/><stop offset="1" stop-color="#a3a3a1"/></linearGradient></defs><circle cx="14.85" cy="1210.5" r="10.6" fill="url(#gSt)" stroke="#6d6d6d" stroke-width="1.3"/><defs><linearGradient id="gDoc" x1="0" y1="0" x2="0" y2="1"><stop offset="0" stop-color="#fbfbfb"/><stop offset="1" stop-color="#e2e2e0"/></linearGradient><linearGradient id="gBand" x1="0" y1="0" x2="1" y2="0"><stop offset="0" stop-color="#5bb2de"/><stop offset="1" stop-color="#1f86b8"/></linearGradient></defs><rect x="42.6" y="1199.4" width="18" height="22.2" fill="url(#gDoc)" stroke="#cfcfcd" stroke-width="0.9"/><rect x="43.2" y="1199.8" width="13.6" height="5" fill="url(#gBand)"/><path d="M46 1206.2 L49.3 1200.6 L51.2 1206.2 Z" fill="#eafaff"/><rect x="45.5" y="1209.2" width="12" height="0.9" fill="#d2d2d0"/><rect x="45.5" y="1213.8" width="12" height="0.9" fill="#d2d2d0"/><rect x="45.5" y="1218.2" width="12" height="0.9" fill="#d2d2d0"/><path d="M51.5 1212.8 L61.5 1202.2" stroke="#4a4a4c" stroke-width="3.8" stroke-linecap="round"/><path d="M61.2 1202.5 L63.2 1200.4" stroke="#6a6a6a" stroke-width="3.4" stroke-linecap="round"/><path d="M49.2 1215 L51.8 1212.4" stroke="#0a0a0a" stroke-width="3" stroke-linecap="round"/></svg>
<div style="left:7.8px;top:169.7px;width:2111.5px;height:23.8px;border:1.4px solid #8a3446;box-sizing:border-box;box-shadow:0 0 0 0.9px rgba(245,150,150,0.55)"></div>
<div style="left:1.9px;top:485.8px;width:1096.4px;height:682.3px;border:1.5px solid #9b3840;box-sizing:border-box;box-shadow:0 0 0 1.2px rgba(255,195,195,0.55), inset 0 0 0 1px rgba(255,255,255,0.55)"></div>
</body></html>
